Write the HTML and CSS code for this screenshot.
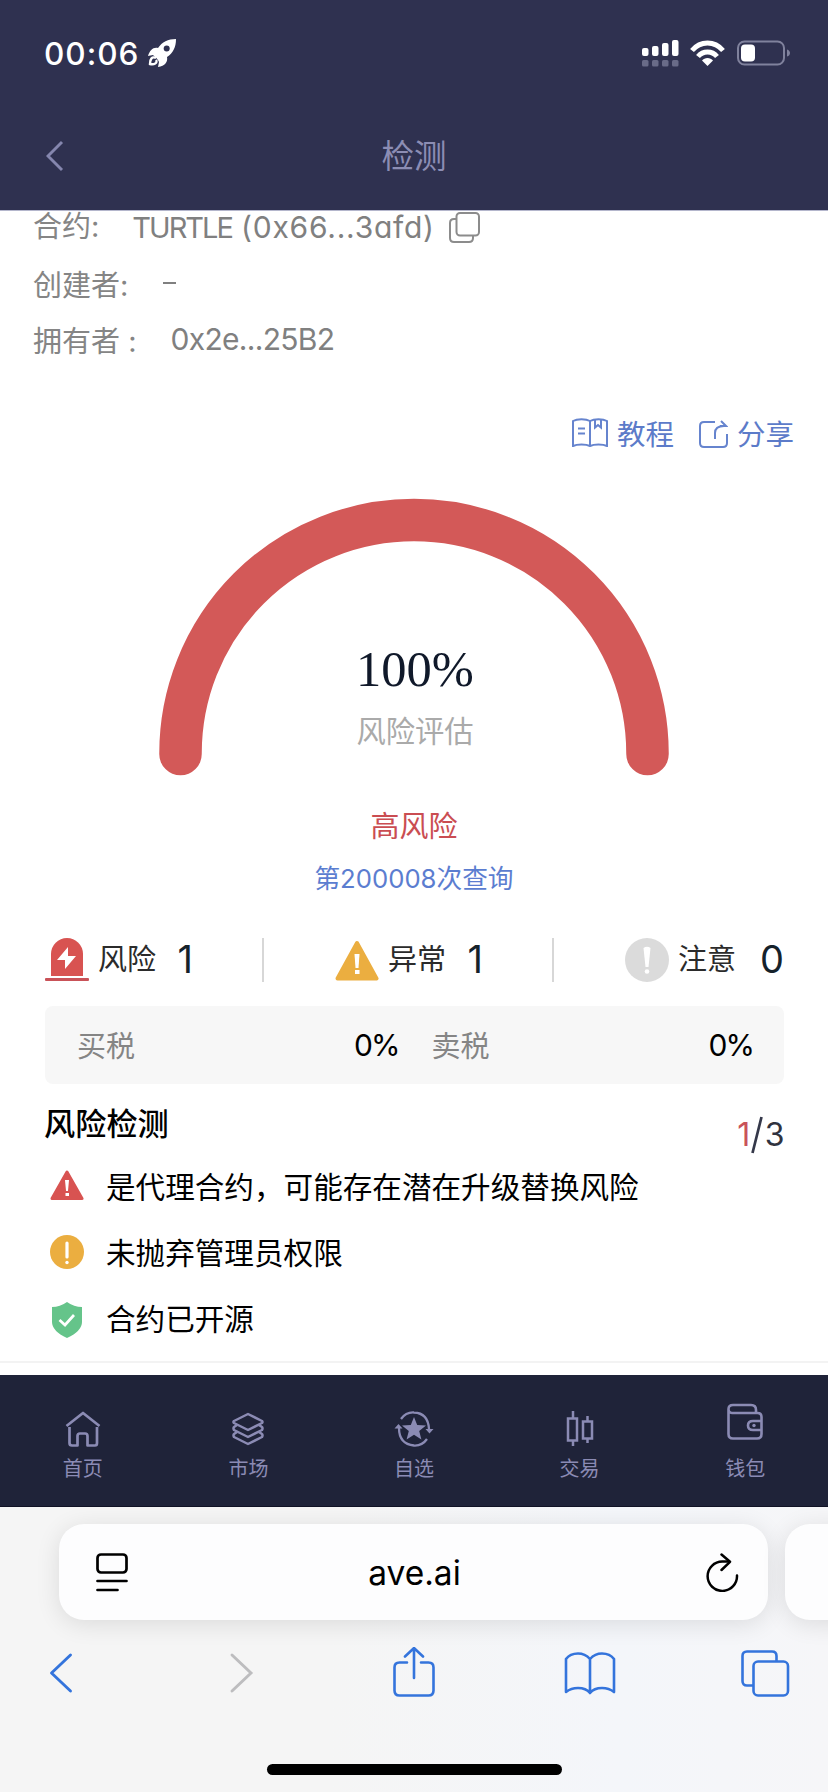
FILE: index.html
```html
<!DOCTYPE html>
<html lang="zh-CN">
<head>
<meta charset="utf-8">
<title>检测</title>
<link rel="stylesheet" href="styles.css">
</head>
<body>
<div class="screen">
  <header class="top">
    <div class="status">
      <span class="clock">00:06</span>
      <svg class="rocket" width="28" height="28" viewBox="0 0 28 28"><path fill="#fff" d="M28 0C20 0 14 3 10 9C5 8 2 11 0 17L5 16L7 18C9 19 10 21 11 23L10 28C17 27 20 23 19 18C25 14 28 8 28 0Z"/><path d="M8 19C4 17 2 20 2 25C6 26 10 24 8 21" fill="none" stroke="#fff" stroke-width="2.4"/><circle cx="18.700" cy="9.500" r="3" fill="#2f3150"/></svg>
      <span class="spacer"></span>
      <svg class="signal" width="37" height="27" viewBox="0 0 37 27"><g fill="#fff"><rect x="0" y="8" width="6.500" height="8" rx="2"/><rect x="10" y="6" width="6.500" height="10" rx="2"/><rect x="20" y="3" width="6.500" height="13" rx="2"/><rect x="30" y="0" width="6.500" height="16" rx="2"/></g><g fill="#696b88"><rect x="0" y="20" width="6.500" height="6.500" rx="1.500"/><rect x="10" y="20" width="6.500" height="6.500" rx="1.500"/><rect x="20" y="20" width="6.500" height="6.500" rx="1.500"/><rect x="30" y="20" width="6.500" height="6.500" rx="1.500"/></g></svg>
      <svg class="wifi" width="35" height="26" viewBox="0 0 35 26"><g fill="none" stroke="#fff" stroke-width="5"><path d="M2 10.500C10.500 0.500 24.500 0.500 33 10.500"/><path d="M8 16.500C13 10.500 22 10.500 27 16.500"/></g><path d="M17.500 26L12 20.500C14.500 17 20.500 17 23 20.500Z" fill="#fff"/></svg>
      <svg class="battery" width="53" height="26" viewBox="0 0 53 26"><rect x="1" y="1.500" width="46" height="23" rx="6.500" fill="none" stroke="#80829d" stroke-width="2"/><rect x="4" y="4.500" width="14" height="17" rx="4" fill="#fff"/><path d="M50 9.500C54 10.500 54 15.500 50 16.500Z" fill="#80829d"/></svg>
    </div>
    <div class="titlebar">
      <svg width="18" height="32" viewBox="0 0 18 32"><path d="M16 2L2 16L16 30" fill="none" stroke="#8586ae" stroke-width="2.900"/></svg>
      <h1>检测</h1>
      <span></span>
    </div>
  </header>

  <main class="report">
    <section class="facts">
      <p><span>合约:</span><b class="address"><span class="token">TURTLE</span> (0x66...3afd)</b><svg class="copy" width="31" height="31" viewBox="0 0 31 31"><g fill="none" stroke="#8c8c8c" stroke-width="2"><rect x="7.500" y="1" width="22.500" height="22.500" rx="3.500"/><path d="M7.500 7H5Q1 7 1 11V26Q1 30 5 30H20Q24 30 24 26V23.500"/></g></svg></p>
      <p><span>创建者:</span><b class="dash"></b></p>
      <p><span>拥有者 :</span><b class="owner">0x2e...25B2</b></p>
    </section>

    <nav class="actions">
      <a><svg class="guide" width="36" height="29" viewBox="0 0 36 29"><g fill="none" stroke="#6684ce" stroke-width="2"><path d="M18 3C14 0.500 5 0.500 1 3V28C5 26 14 26 18 28C22 26 31 26 35 28V3C31 0.500 22 0.500 18 3ZM18 3V28"/><path d="M6 10.500H13M6 15.500H13M23 2V9.500L26 7L29 9.500V2"/></g></svg><span>教程</span></a>
      <a><svg class="share" width="29" height="28" viewBox="0 0 29 28"><g fill="none" stroke="#6684ce" stroke-width="2"><path d="M16 2H5Q1 2 1 6V23Q1 27 5 27H24Q28 27 28 23V14"/><path d="M16 19V13Q16 6 25 6M22 1L27 6H21"/></g></svg><span>分享</span></a>
    </nav>

    <section class="gauge">
      <svg width="512" height="280" viewBox="0 0 512 280"><path d="M22.500 256V255.500A233.500 233.500 0 0 1 489.500 255.500V256" fill="none" stroke="#d35958" stroke-width="42.500" stroke-linecap="round"/></svg>
      <div class="reading"><strong>100%</strong><span>风险评估</span></div>
    </section>
    <p class="level">高风险</p>
    <p class="queries">第200008次查询</p>

    <section class="stats">
      <div class="stat"><svg width="44" height="44" viewBox="0 0 44 44"><path d="M6 38V16A16 16 0 0 1 38 16V38Z" fill="#d85351"/><rect y="40" width="44" height="3" rx="1" fill="#c95258"/><path d="M23 9L12 22H20V31L31 18H23Z" fill="#fff"/></svg><span>风险</span><b>1</b></div>
      <i></i>
      <div class="stat"><svg width="44" height="44" viewBox="0 0 44 44"><path d="M22 5L41.500 40.500H2.500Z" fill="#ebae40" stroke="#ebae40" stroke-width="4" stroke-linejoin="round"/><path d="M19.500 16H24.500L23.500 30H20.500Z" fill="#fff"/><rect x="20" y="32" width="4.500" height="4" fill="#fff"/></svg><span>异常</span><b>1</b></div>
      <i></i>
      <div class="stat last"><svg width="44" height="44" viewBox="0 0 44 44"><circle cx="22" cy="22" r="22" fill="#dbdbdb"/><path d="M18.500 10Q22 7.500 25.500 10L23.500 29H20.500Z" fill="#fff"/><circle cx="22" cy="33.500" r="2.300" fill="#fff"/></svg><span>注意</span><b>0</b></div>
    </section>

    <section class="taxes">
      <div><span>买税</span><b>0%</b></div>
      <div><span>卖税</span><b>0%</b></div>
    </section>

    <section class="checks">
      <div class="checks-head"><h2>风险检测</h2><span class="count"><em>1</em><svg width="12" height="38" viewBox="0 0 12 38"><path d="M10.500 1L1.500 37" stroke="#35384a" stroke-width="2.700"/></svg>3</span></div>
      <ul>
        <li><svg width="34" height="34" viewBox="0 0 34 34"><path d="M17 3L32 29.500H2Z" fill="#d85351" stroke="#d85351" stroke-width="3" stroke-linejoin="round"/><path d="M15 11H19L18 22H16Z" fill="#fff"/><rect x="15.500" y="24" width="3.500" height="3" fill="#fff"/></svg><span>是代理合约，可能存在潜在升级替换风险</span></li>
        <li><svg width="34" height="34" viewBox="0 0 34 34"><circle cx="17" cy="17" r="17" fill="#ebae40"/><path d="M17 8V22" stroke="#fff" stroke-width="3.200" stroke-linecap="round"/><circle cx="17" cy="27.500" r="1.700" fill="#fff"/></svg><span>未抛弃管理员权限</span></li>
        <li><svg class="shield" width="34" height="36" viewBox="0 0 34 36"><path d="M17 0Q24 5 32 5V20Q32 29 17 36Q2 29 2 20V5Q10 5 17 0Z" fill="#65c48a"/><path d="M9.500 18L15 23L24 13" fill="none" stroke="#fff" stroke-width="2.700"/></svg><span>合约已开源</span></li>
      </ul>
    </section>
  </main>

  <nav class="tabs">
    <a><svg width="36" height="40" viewBox="0 0 36 40"><g fill="none" stroke="#8b8bb4" stroke-width="2.700" stroke-linejoin="round"><path d="M1.500 17L18 4L34.500 17"/><path d="M4.500 18V34Q4.500 36.500 7 36.500H12.500V27Q12.500 24.500 15 24.500H20Q22.500 24.500 22.500 27V36.500H30Q32 36.500 32 34V18"/></g></svg><span>首页</span></a>
    <a><svg width="36" height="40" viewBox="0 0 36 40"><g fill="none" stroke="#8b8bb4" stroke-width="2.500" stroke-linejoin="round"><path d="M18 5L32 12Q33 13 32 14L18 21L4 14Q3 13 4 12Z"/><path d="M7 16L4 18Q3 19.500 4 21L18 28L32 21Q33 19.500 32 18L29 16"/><path d="M7 23L4 25Q3 26.500 4 28L18 35L32 28Q33 26.500 32 25L29 23"/></g></svg><span>市场</span></a>
    <a><svg width="42" height="40" viewBox="0 0 42 40"><g fill="none" stroke="#8b8bb4" stroke-width="2.300"><path d="M8 10Q13 3 21 3.500Q35 4 36 20M34 30Q29 37 21 36.500Q6 35 6 19"/></g><path d="M32.500 20H40.500L36.500 24.500ZM1.500 19.500H9.500L5.500 15Z" fill="#8b8bb4"/><path d="M21 8L24.200 16L33 16.500L26.200 22L28.400 30.500L21 25.700L13.600 30.500L15.800 22L9 16.500L17.800 16Z" fill="#8b8bb4"/></svg><span>自选</span></a>
    <a><svg width="36" height="40" viewBox="0 0 36 40"><g fill="none" stroke="#8b8bb4" stroke-width="2.500"><rect x="6" y="9.500" width="9" height="22"/><path d="M11 2V9.500M11 31.500V37"/><rect x="21" y="12.500" width="9" height="17"/><path d="M25.500 7V12.500M25.500 29.500V34"/></g></svg><span>交易</span></a>
    <a class="wallet"><svg width="36" height="40" viewBox="0 0 36 40"><g fill="none" stroke="#8b8bb4" stroke-width="2.600"><path d="M1.500 7V32Q1.500 36.500 6 36.500H30Q34.500 36.500 34.500 32V15Q34.500 11 30.500 11H5Q1.500 11 1.500 7Q1.500 3 6 3H24Q29 3 29 8V11"/><path d="M34.500 19H26Q21 19 21 23.500Q21 28 26 28H34.500"/></g><circle cx="27" cy="23.500" r="1.700" fill="#8b8bb4"/></svg><span>钱包</span></a>
  </nav>

  <footer class="browser">
    <div class="pills">
      <div class="pill">
        <svg width="33" height="39" viewBox="0 0 33 39"><g fill="none" stroke="#000" stroke-width="2.700" stroke-linecap="round"><rect x="2.500" y="1.500" width="29" height="18" rx="3.500"/><path d="M2.500 28H31.500M2.500 37H22.500"/></g></svg>
        <span>ave.ai</span>
        <svg width="33" height="39" viewBox="0 0 33 39"><g fill="none" stroke="#000" stroke-width="2.500" stroke-linecap="round" stroke-linejoin="round"><path d="M31 22.500A14.700 14.700 0 1 1 16.500 8.500H23"/><path d="M15.500 1.500L24 8.800L15.500 17"/></g></svg>
      </div>
      <div class="pill next"></div>
    </div>
    <div class="tools">
      <svg width="50" height="52" viewBox="0 0 50 52"><path d="M22.500 8L3.500 26L22.500 44" fill="none" stroke="#3474dc" stroke-width="2.900" stroke-linecap="round" stroke-linejoin="round"/></svg>
      <svg width="50" height="52" viewBox="0 0 50 52"><path d="M12 8L31 26L12 44" fill="none" stroke="#bdbdbf" stroke-width="2.900" stroke-linecap="round"/></svg>
      <svg width="50" height="52" viewBox="0 0 50 52"><g transform="translate(-3 0)" fill="none" stroke="#3474dc" stroke-width="2.600" stroke-linecap="round"><path d="M18 15.500H10.500Q5.500 15.500 5.500 20.500V43.500Q5.500 48.500 10.500 48.500H39.500Q44.500 48.500 44.500 43.500V20.500Q44.500 15.500 39.500 15.500H32"/><path d="M25 31V1.500M16 9.500L25 1L34 9.500"/></g></svg>
      <svg width="54" height="52" viewBox="2 0 54 52"><g fill="none" stroke="#3474dc" stroke-width="2.600" stroke-linejoin="round"><path d="M28 12Q23 6.500 16 6.500Q8 6.500 4 12V45Q9 41 16 41Q24 41 28 46Q32 41 40 41Q47 41 52 45V12Q48 6.500 40 6.500Q33 6.500 28 12ZM28 12V46"/></g></svg>
      <svg width="50" height="52" viewBox="0 0 50 52"><g fill="none" stroke="#3474dc" stroke-width="2.600"><path d="M13 38.500H7Q2.500 38.500 2.500 34V9Q2.500 4.500 7 4.500H32Q36.500 4.500 36.500 9V14.500"/><rect x="13.500" y="14.500" width="34.500" height="34" rx="4.500"/></g></svg>
    </div>
    <div class="home"></div>
  </footer>
</div>
</body>
</html>
```
FILE: styles.css
```css
* { box-sizing: border-box; }
body, h1, h2, p, ul { margin: 0; padding: 0; }
body {
  width: 828px;
  font-family: Inter, "Noto Sans CJK SC", sans-serif;
  font-feature-settings: "cv11";
  background: #fff;
}
svg { display: block; flex: none; }
b, em, i { font-weight: 400; font-style: normal; }
.screen { display: flex; flex-direction: column; height: 1792px; overflow: hidden; }

.top { height: 211px; flex: none; background: #2f3150; border-bottom: 1px solid #b4b6cc; }
.status { display: flex; align-items: center; height: 106px; padding: 0 38px 0 44px; }
.clock { width: 104px; font-size: 31.5px; font-weight: 500; letter-spacing: 1px; color: #fff; white-space: nowrap; }
.spacer { flex: 1; }
.wifi { margin: 0 12px 0 11px; }
.titlebar { display: grid; grid-template-columns: 1fr auto 1fr; align-items: center; height: 99px; padding: 0 46px; }
.titlebar h1 { padding-top: 2px; font-size: 32.5px; line-height: 48px; font-weight: 400; color: #8c8db4; }

.report { height: 1164px; flex: none; background: #fff; }
.facts { padding-left: 33px; font-size: 29px; color: #858585; }
.facts p { display: flex; align-items: center; height: 56px; padding-bottom: 3px; white-space: nowrap; }
.facts p:first-child { height: 45px; padding-bottom: 13px; line-height: 32px; }
.facts b { color: #808080; }
.address { width: 300px; margin-left: 33px; font-size: 30px; letter-spacing: 0.75px; }
.token { font-size: 29px; letter-spacing: -2px; }
.copy { margin-left: 17px; }
.facts .dash { width: 13px; height: 2px; margin-left: 35px; background: #808080; }
.owner { margin-left: 34px; font-size: 30px; letter-spacing: -0.7px; }

.actions { display: flex; justify-content: flex-end; gap: 24px; height: 40px; margin-top: 47px; padding-right: 34px; font-size: 28.5px; line-height: 40px; color: #5c7bc9; }
.actions a { display: flex; align-items: center; gap: 9px; }
.actions a:first-child { margin-right: 1px; }
.guide { margin-bottom: 5px; }
.share { margin-bottom: 3px; }

.gauge { position: relative; width: 512px; height: 278px; margin: 43px auto 0; }
.reading { position: absolute; inset: 143px -1px auto 1px; display: flex; flex-direction: column; align-items: center; }
.reading strong { font: 400 50.5px/56px "Liberation Serif", serif; color: #10192a; }
.reading span { margin-top: 13px; font-size: 29.3px; line-height: 44px; color: #aaa; }
.level { margin-top: 29px; text-align: center; font-size: 29px; line-height: 44px; color: #ca4d52; }
.queries { margin-top: 10px; text-align: center; font-size: 25.7px; line-height: 40px; color: #5b7dd0; }

.stats { display: flex; justify-content: space-between; align-items: center; height: 44px; margin: 39px 44px 0 45px; }
.stats i { width: 2px; height: 44px; background: #d7d7d7; }
.stat { display: flex; align-items: center; width: 145px; font-size: 29px; line-height: 44px; color: #2b2b2b; white-space: nowrap; }
.stat span { margin-left: 9px; }
.stat b { margin-left: auto; font-size: 38px; line-height: 42px; margin-bottom: 2px; color: #15222b; }
.stat:not(.last) b { margin-right: -3px; }
.stat.last { width: 159px; }

.taxes { display: grid; grid-template-columns: 1fr 1fr; gap: 34px; height: 78px; margin: 24px 44px 0 45px; padding: 0 32px; border-radius: 8px; background: #f7f7f7; }
.taxes div { display: flex; align-items: center; justify-content: space-between; font-size: 29px; color: #858585; }
.taxes div span { padding-bottom: 2px; }
.taxes b { margin-right: -1px; font-size: 30px; letter-spacing: -2px; color: #000; }

.checks { height: 279px; border-bottom: 2px solid #f3f3f3; }
.checks-head { display: flex; justify-content: space-between; height: 69px; padding: 17px 45px 0 44px; }
.checks h2 { font-size: 31.2px; line-height: 46px; font-weight: 500; color: #000; }
.count { display: flex; align-items: center; gap: 2px; height: 67px; font-size: 32px; line-height: 40px; letter-spacing: -1.5px; color: #30333f; }
.count em { color: #c9535a; }
.checks ul { list-style: none; }
.checks li { display: flex; align-items: center; gap: 22px; height: 66px; padding-left: 50px; font-size: 29.6px; color: #000; white-space: nowrap; }
.checks li span { padding-bottom: 2px; }
.shield { margin-top: 3px; }

.tabs { display: grid; grid-template-columns: repeat(5, 1fr); height: 132px; flex: none; background: #1f2339; border-bottom: 1px solid #101225; }
.tabs a { display: flex; flex-direction: column; align-items: center; padding-top: 34px; color: #8b8bb4; font-size: 20px; line-height: 30px; }
.tabs span { margin-top: 5px; }
.tabs .wallet { padding-top: 27px; }
.tabs .wallet span { margin-top: 12px; }

.browser { height: 285px; flex: none; background: linear-gradient(90deg, #f5f5f5 0 40%, #f4f6fa 75%, #f6f6f8); overflow: hidden; }
.pills { display: flex; gap: 17px; padding: 17px 0 0 59px; }
.pill { display: grid; grid-template-columns: 33px 1fr 33px; align-items: center; width: 709px; height: 96px; flex: none; padding: 0 29px 0 36px; border-radius: 25px; background: #fdfdfe; box-shadow: 0 4px 24px rgba(0, 0, 0, .11); }
.pill span { padding: 1px 5px 0 0; text-align: center; font-size: 33.5px; color: #000; font-feature-settings: normal; }
.pill.next { width: 200px; }
.tools { display: flex; justify-content: space-between; height: 52px; margin-top: 27px; padding: 0 38px 0 48px; }
.home { width: 295px; height: 11px; margin: 65px auto 0; border-radius: 6px; background: #000; }
```
